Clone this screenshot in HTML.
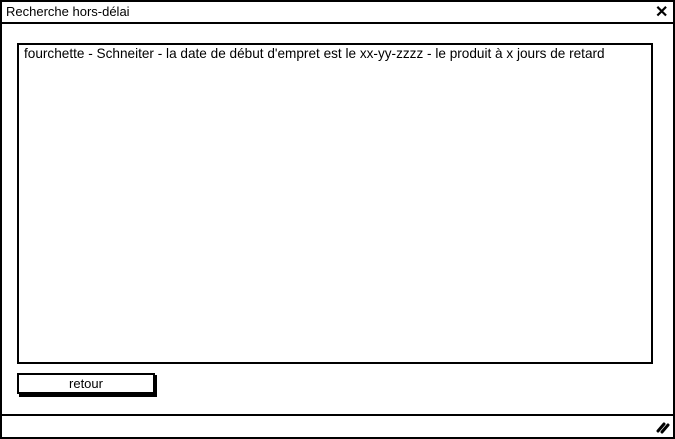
<!DOCTYPE html>
<html><head><meta charset="utf-8"><style>
body{margin:0;width:675px;height:439px;background:#fff;position:relative;overflow:hidden;font-family:"Liberation Sans",sans-serif;font-size:12px;color:#000}
div{position:absolute;box-sizing:border-box}
</style></head><body>
<div style="left:0;top:0;width:675px;height:439px;border:2px solid #000"></div>
<div style="left:0;top:22px;width:675px;height:2px;background:#000"></div>
<div style="left:6px;top:4px;font-size:13px">Recherche hors-délai</div>
<div style="left:655px;top:2px;font-size:16px;font-weight:bold">✕</div>
<div style="left:17px;top:43px;width:636px;height:321px;border:2px solid #000"></div>
<div style="left:24px;top:46px;font-size:13.6px;white-space:nowrap">fourchette - Schneiter - la date de début d'empret est le xx-yy-zzzz - le produit à x jours de retard</div>
<div style="left:19px;top:375px;width:138px;height:22px;background:#000"></div>
<div style="left:17px;top:373px;width:138px;height:21px;border:2px solid #000;background:#fff;text-align:center;line-height:17px;font-size:13px">retour</div>
<div style="left:0;top:414px;width:675px;height:2px;background:#000"></div>
<svg style="position:absolute;left:656px;top:420px" width="14" height="14"><path d="M2 11 L8 4 M6 12 L12 5" stroke="#000" stroke-width="3" stroke-linecap="round"/></svg>
</body></html>
